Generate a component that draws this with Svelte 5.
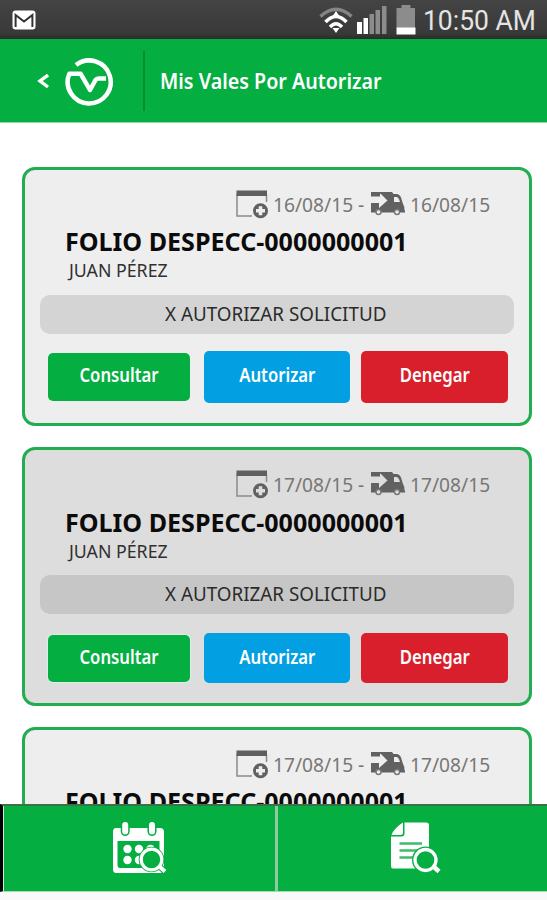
<script lang="ts">
  type Vale = {
    folio: string;
    name: string;
    requested: string;
    delivery: string;
    alt: boolean;
  };

  const vales: Vale[] = [
    { folio: "DESPECC-0000000001", name: "JUAN PÉREZ", requested: "16/08/15", delivery: "16/08/15", alt: false },
    { folio: "DESPECC-0000000001", name: "JUAN PÉREZ", requested: "17/08/15", delivery: "17/08/15", alt: true },
    { folio: "DESPECC-0000000001", name: "JUAN PÉREZ", requested: "17/08/15", delivery: "17/08/15", alt: false },
  ];
</script>

<div class="app">
  <div class="status-bar">
    <svg class="mail" width="24" height="20" viewBox="0 0 24 20">
      <rect x="0.5" y="0.5" width="23" height="19" rx="3" fill="#fff" />
      <path d="M3.6 17V5L12 11.6L20.4 5V17" fill="none" stroke="#333" stroke-width="2" />
    </svg>
    <div class="indicators">
      <svg class="wifi" width="34" height="28" viewBox="0 0 34 28">
        <path d="M1.5 10.5Q17 -4 32.5 10.5" fill="none" stroke="#858585" stroke-width="3.4" />
        <path d="M6.5 16Q17 5 27.5 16" fill="none" stroke="#fff" stroke-width="3.6" />
        <path d="M11 21Q17 14.5 23 21" fill="none" stroke="#fff" stroke-width="3.4" />
        <path d="M17 5L21 11H13ZM13.5 22L17 27L20.5 22Z" fill="#fff" />
      </svg>
      <svg class="signal" width="30" height="28" viewBox="0 0 30 28">
        <path d="M0 16h5v12H0zM6.5 12H11v16H6.5z" fill="#fff" />
        <path d="M12.5 8h4.5v20h-4.5zM18.5 4h4.5v24h-4.5zM25 0h4.5v28H25z" fill="#8c8c8c" />
      </svg>
      <svg class="battery" width="20" height="30" viewBox="0 0 20 30">
        <path d="M5.5 0h9v3H19v20H0.5V3H5.5z" fill="#8c8c8c" />
        <path d="M0.5 22.5H19.5V29.5H0.5z" fill="#fff" />
      </svg>
      <span class="clock">10:50 AM</span>
    </div>
  </div>

  <header>
    <button class="back" aria-label="Regresar">
      <svg width="12" height="16" viewBox="0 0 12 16">
        <path d="M11 2L3 8L11 14" fill="none" stroke="#fff" stroke-width="3.4" />
      </svg>
    </button>
    <svg class="logo" width="50" height="50" viewBox="0 0 50 50">
      <path
        d="M11 9A21.5 21.5 0 1 1 4.3 17.8H15.700L25 34L30.500 24Q31.500 22.500 33.500 22.500H41"
        fill="none"
        stroke="#fff"
        stroke-width="4.5"
        stroke-linejoin="round"
      />
    </svg>
    <h1><span>Mis Vales Por Autorizar</span></h1>
  </header>

  <main>
    {#each vales as vale}
      <article class="card" class:alt={vale.alt}>
        <div class="dates">
          <svg class="calendar-add" width="34" height="30" viewBox="0 0 34 30">
            <path d="M1 4V26H16M30.5 5V12" fill="none" stroke="#8b8b8b" stroke-width="1.5" />
            <path d="M0.5 0.5H31V6H0.5z" fill="#5f5f5f" />
            <circle cx="24.5" cy="20.8" r="7.5" fill="#606060" />
            <path class="plus" d="M24.5 16.3V25.3M20 20.8H29" />
          </svg>
          <span class="date">{vale.requested}</span>
          <span class="dash">-</span>
          <svg class="truck" width="35" height="25" viewBox="0 0 35 25">
            <path
              d="M0 1H21L22.500 3H25.500Q28.500 3 30 6.500L32 13Q33.500 15 33.500 19.500H34V21.500H0z"
              fill="#616161"
            />
            <path class="cutout" d="M0 5.500H9V2.500L10.500 3.500L16.500 9.500L8 17V12H0z" />
            <path class="cutout" d="M23 6H25.500Q27.500 6 29 11H23z" />
            <circle class="wheel" cx="7.500" cy="21" r="2.5" />
            <circle class="wheel" cx="26" cy="21" r="2.5" />
          </svg>
          <span class="date">{vale.delivery}</span>
        </div>
        <h2><span>FOLIO {vale.folio}</span></h2>
        <p class="name"><span>{vale.name}</span></p>
        <div class="state"><span>X AUTORIZAR SOLICITUD</span></div>
        <div class="actions">
          <button class="view"><span>Consultar</span></button>
          <button class="approve"><span>Autorizar</span></button>
          <button class="deny"><span>Denegar</span></button>
        </div>
      </article>
    {/each}
  </main>

  <nav>
    <button aria-label="Buscar por fecha">
      <svg width="55" height="52" viewBox="0 0 55 52">
        <path
          fill="#fff"
          fill-rule="evenodd"
          d="M4 6H48Q52 6 52 10V47Q52 51 48 51H4Q1 51 1 47V10Q1 6 4 6ZM5.5 19V43Q5.5 46 8 46H47.5V19Z"
        />
        <path d="M13.2 0V9.5M40 0V9.5" stroke="#05ae41" stroke-width="9" stroke-linecap="round" />
        <path d="M13.2 3V9.5M40 3V9.5" stroke="#fff" stroke-width="6" stroke-linecap="round" />
        <g fill="#fff">
          <circle cx="15.5" cy="27" r="4.2" />
          <circle cx="27" cy="27" r="4.2" />
          <circle cx="38.5" cy="27" r="4.2" />
          <circle cx="15.5" cy="38" r="4.2" />
          <circle cx="27" cy="38" r="4.2" />
        </g>
        <circle cx="39.5" cy="37.5" r="12.8" fill="#05ae41" />
        <path d="M47 44L53.5 50" stroke="#05ae41" stroke-width="6" />
        <circle cx="39.5" cy="37.5" r="10.3" fill="#05ae41" stroke="#fff" stroke-width="3.2" />
        <path d="M47.5 44.5L53 49.5" stroke="#fff" stroke-width="4" />
      </svg>
    </button>
    <button aria-label="Buscar documento">
      <svg width="51" height="52" viewBox="0 0 51 52">
        <path d="M13.5 0.5H36Q39 0.5 39 3V46.5H3Q1 46.5 1 44V14.5H11.5Q14.5 14.5 14.5 11.5V0.5Z" fill="#fff" />
        <path d="M13 0.5V10.5Q13 13 10.5 13H1.5Q4 6 13 0.5Z" fill="#fff" />
        <path d="M9.5 21.5H32M9.5 28.5H28M9.5 35.5H23" stroke="#3fbd6a" stroke-width="2.6" />
        <circle cx="35.5" cy="38" r="13.5" fill="#05ae41" />
        <circle cx="35.5" cy="38" r="10.5" fill="none" stroke="#fff" stroke-width="3.3" />
        <path d="M43.5 44.5L49 49.5" stroke="#fff" stroke-width="4.5" />
      </svg>
    </button>
  </nav>
</div>

<style>
  :global(body) {
    margin: 0;
    background: #fff;
  }

  .app {
    width: 547px;
    height: 900px;
    display: flex;
    flex-direction: column;
    overflow: hidden;
    background: #f9f9f9;
    font-family: "Noto Sans", "Open Sans", sans-serif;
  }

  svg {
    display: block;
    flex: none;
  }

  button {
    border: 0;
    padding: 0;
    margin: 0;
    background: none;
    font: inherit;
    color: inherit;
  }

  h1,
  h2,
  p {
    margin: 0;
  }

  span {
    display: inline-block;
    white-space: nowrap;
    transform-origin: 0 50%;
  }

  .status-bar {
    flex: none;
    box-sizing: border-box;
    height: 39px;
    padding: 0 12px;
    display: flex;
    align-items: center;
    justify-content: space-between;
    background: linear-gradient(#444, #393939 85%, #292d2a);
  }

  .indicators {
    display: flex;
    align-items: center;
  }

  .signal {
    margin-left: 4px;
  }

  .battery {
    margin-left: 9px;
  }

  .clock {
    width: 112px;
    margin-left: 7px;
    font-family: Roboto, sans-serif;
    font-size: 27px;
    line-height: 38px;
    color: #e4e4e4;
    margin-top: 3px;
    transform: scaleX(0.98);
  }

  header {
    flex: none;
    box-sizing: border-box;
    height: 84px;
    padding-left: 37px;
    display: flex;
    align-items: center;
    background: #05ae41;
    border-bottom: 1px solid #8fd9a9;
  }

  .logo {
    margin-left: 16px;
  }

  h1 {
    margin-left: 28px;
    padding-left: 15px;
    border-left: 2px solid #078b36;
    font-size: 21.5px;
    line-height: 60px;
    font-weight: 600;
    color: #fff;
  }
  h1 span {
    transform: scaleX(0.915);
  }

  main {
    flex: 1;
    min-height: 0;
    overflow: hidden;
    padding: 44px 15px 0 22px;
    display: flex;
    flex-direction: column;
    gap: 21px;
    background: #fff;
  }

  .card {
    --card-bg: #eee;
    --state-bg: #d4d4d4;
    flex: none;
    box-sizing: border-box;
    height: 259px;
    padding: 20px 15px 0;
    border: 3px solid #22ae50;
    border-radius: 13px;
    background: var(--card-bg);
  }
  .card.alt {
    --card-bg: #dddddd;
    --state-bg: #c6c6c6;
  }

  .dates {
    height: 30px;
    padding-left: 196px;
    display: flex;
    align-items: flex-start;
    font-size: 19.2px;
    line-height: 30px;
    color: #777;
  }

  .date {
    width: 81px;
    margin-left: 3px;
  }

  .dash {
    margin-left: 4px;
    width: 13px;
  }

  .plus {
    stroke: var(--card-bg);
    stroke-width: 3.6;
  }

  .truck {
    margin-top: 1px;
  }

  .truck + .date {
    margin-left: 4px;
  }

  .cutout {
    fill: var(--card-bg);
  }

  .wheel {
    fill: var(--card-bg);
    stroke: #777;
    stroke-width: 1.4;
  }

  h2 {
    padding-left: 25px;
    font-size: 25px;
    line-height: 36px;
    height: 38px;
    margin-top: 3px;
    font-weight: 700;
    color: #0b0b0b;
  }
  h2 span {
    transform: scaleX(1.003);
  }
  .alt h2 {
    margin-top: 4px;
  }

  .name {
    padding-left: 29px;
    height: 34px;
    font-size: 18px;
    line-height: 18px;
    color: #303030;
  }
  .alt .name {
    height: 33px;
  }
  .name span {
    transform: scaleX(0.985);
  }

  .state {
    height: 39px;
    border-radius: 10px;
    background: var(--state-bg);
    text-align: center;
    font-size: 19px;
    line-height: 38px;
    color: #2b2b2b;
  }
  .state span {
    transform: scaleX(0.99);
  }

  .actions {
    padding: 17px 7px 0 8px;
    display: grid;
    grid-template-columns: 142px 146px 146px;
    column-gap: 14px;
    align-items: center;
    font-size: 19px;
    font-weight: 600;
    color: #fff;
  }
  .actions button {
    height: 52px;
    padding-bottom: 4px;
    border-radius: 5px;
  }
  .actions .view {
    height: 48px;
    background: #05ae41;
  }
  .actions .approve {
    background: #039fe3;
  }
  .actions .deny {
    margin-left: -3px;
    margin-right: 2px;
    background: #d91f2b;
  }
  .actions span {
    transform: scaleX(0.88);
    transform-origin: 50% 50%;
  }
  .alt .actions {
    padding-top: 19px;
  }
  .alt .actions button {
    height: 50px;
    padding-bottom: 2px;
  }
  .alt .actions .view {
    height: 47px;
    box-shadow: 0 0 0 1px #d8f0df;
  }

  nav {
    flex: none;
    box-sizing: border-box;
    height: 88px;
    margin-bottom: 8px;
    display: flex;
    background: #05ae41;
    border-top: 2px solid #3b7049;
    border-bottom: 1px solid #9fdcb4;
    border-left: 3px solid #000;
  }
  nav button {
    width: 272px;
    padding-bottom: 2px;
    display: flex;
    justify-content: center;
    align-items: center;
    border-left: 1px solid #c9ecd4;
  }
  nav button + button {
    padding-left: 5px;
    border-left: 3px solid #8ecb9f;
  }
</style>
